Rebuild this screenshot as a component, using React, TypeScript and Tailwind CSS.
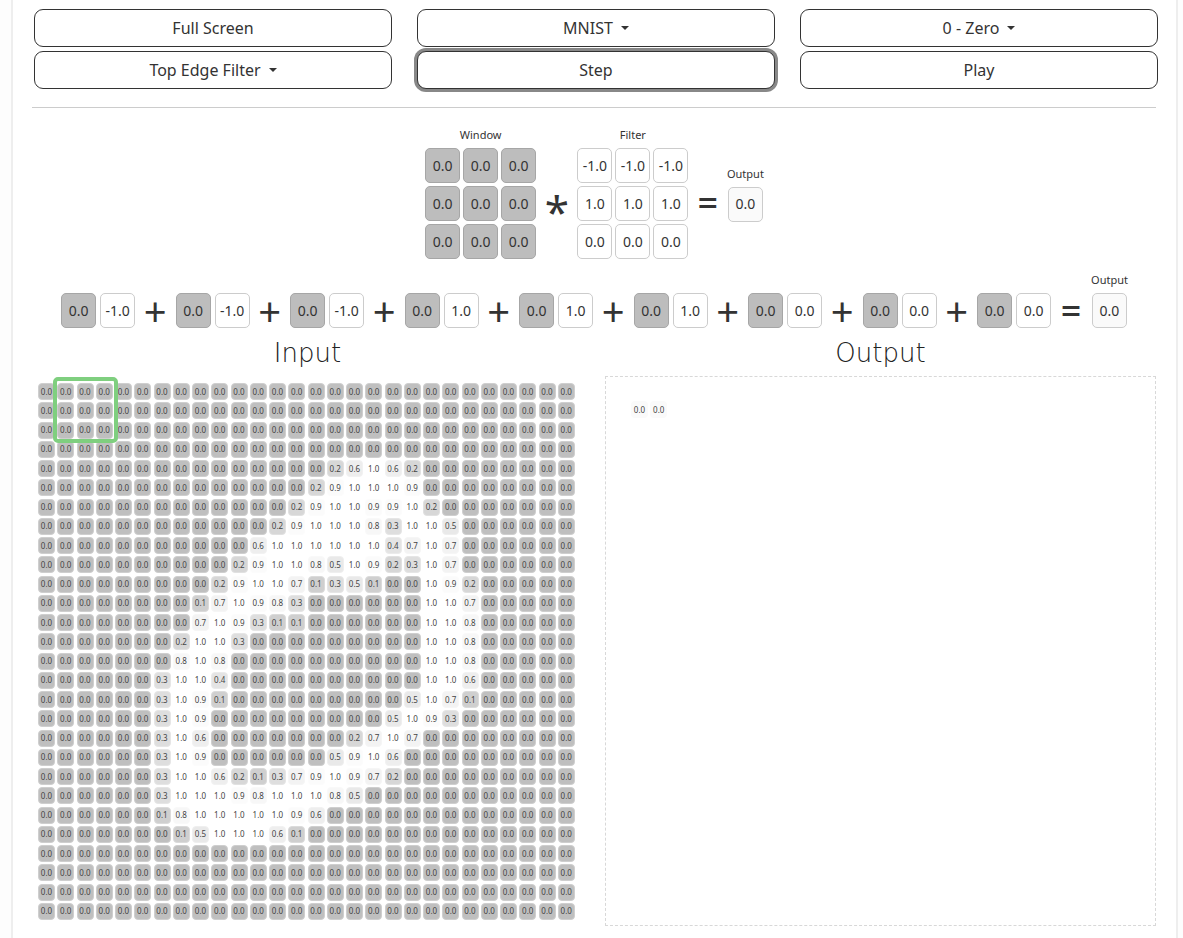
import { Fragment } from 'react';

// non-zero pixels of the digit: row -> list of [start column, values]
const digit: Record<number, [number, number[]][]> = {
  4: [[15, [0.2, 0.6, 1, 0.6, 0.2]]],
  5: [[14, [0.2, 0.9, 1, 1, 1, 0.9]]],
  6: [[13, [0.2, 0.9, 1, 1, 0.9, 0.9, 1, 0.2]]],
  7: [[12, [0.2, 0.9, 1, 1, 1, 0.8, 0.3, 1, 1, 0.5]]],
  8: [[11, [0.6, 1, 1, 1, 1, 1, 1, 0.4, 0.7, 1, 0.7]]],
  9: [[10, [0.2, 0.9, 1, 1, 0.8, 0.5, 1, 0.9, 0.2, 0.3, 1, 0.7]]],
  10: [[9, [0.2, 0.9, 1, 1, 0.7, 0.1, 0.3, 0.5, 0.1]], [20, [1, 0.9, 0.2]]],
  11: [[8, [0.1, 0.7, 1, 0.9, 0.8, 0.3]], [20, [1, 1, 0.7]]],
  12: [[8, [0.7, 1, 0.9, 0.3, 0.1, 0.1]], [20, [1, 1, 0.8]]],
  13: [[7, [0.2, 1, 1, 0.3]], [20, [1, 1, 0.8]]],
  14: [[7, [0.8, 1, 0.8]], [20, [1, 1, 0.8]]],
  15: [[6, [0.3, 1, 1, 0.4]], [20, [1, 1, 0.6]]],
  16: [[6, [0.3, 1, 0.9, 0.1]], [19, [0.5, 1, 0.7, 0.1]]],
  17: [[6, [0.3, 1, 0.9]], [18, [0.5, 1, 0.9, 0.3]]],
  18: [[6, [0.3, 1, 0.6]], [16, [0.2, 0.7, 1, 0.7]]],
  19: [[6, [0.3, 1, 0.9]], [15, [0.5, 0.9, 1, 0.6]]],
  20: [[6, [0.3, 1, 1, 0.6, 0.2, 0.1, 0.3, 0.7, 0.9, 1, 0.9, 0.7, 0.2]]],
  21: [[6, [0.3, 1, 1, 1, 0.9, 0.8, 1, 1, 1, 0.8, 0.5]]],
  22: [[6, [0.1, 0.8, 1, 1, 1, 1, 1, 0.9, 0.6]]],
  23: [[7, [0.1, 0.5, 1, 1, 1, 0.6, 0.1]]],
};

const pixels: number[][] = Array.from({ length: 28 }, (_, r) => {
  const row = new Array(28).fill(0);
  (digit[r] || []).forEach(([start, vals]) => vals.forEach((v, i) => (row[start + i] = v)));
  return row;
});

const gray = (v: number) => Math.round(191 + 64 * Math.pow(v, 0.6));

function GridCell({ v }: { v: number }) {
  const g = gray(v);
  const edge = Math.round((g * 3 + 255) / 4);
  return (
    <div
      className="flex h-[17px] w-[17px] items-center justify-center rounded-[4px] border text-[8px] leading-none text-[#444]"
      style={{ backgroundColor: `rgb(${g},${g},${g})`, borderColor: `rgb(${edge},${edge},${edge})` }}
    >
      {v.toFixed(1)}
    </div>
  );
}

function Box({ v, gray, out }: { v: string; gray?: boolean; out?: boolean }) {
  return (
    <div
      className={
        gray
          ? 'flex h-[35px] w-[35px] items-center justify-center rounded-[5px] border border-[#a6a6a6] bg-[#bdbdbd] text-sm text-[#333]'
          : out
            ? 'flex h-[35px] w-[35px] items-center justify-center rounded-[5px] border border-[#ccc] bg-[#fafafa] text-sm text-[#333]'
            : 'flex h-[35px] w-[35px] items-center justify-center rounded-[5px] border border-[#ccc] bg-white text-sm text-[#333]'
      }
    >
      {v}
    </div>
  );
}

function Caret() {
  return <span className="ml-[8px] inline-block border-x-4 border-t-4 border-x-transparent border-t-[#333] align-middle" />;
}

const filterVals = ['-1.0', '-1.0', '-1.0', '1.0', '1.0', '1.0', '0.0', '0.0', '0.0'];

const btn = 'flex h-[38px] items-center justify-center rounded-[9px] border border-[#333] bg-white text-base text-[#333]';
const heading = "mt-[8px] text-center font-['DejaVu_Sans',sans-serif] text-[26px] font-extralight leading-[34px] text-[#222]";
const outCell = 'flex h-[17px] w-[17px] items-center justify-center rounded-[4px] bg-[#fafafa] text-[8px] leading-none text-[#444]';

export default function App() {
  return (
    <div className="h-[938px] overflow-hidden bg-[#fdfdfd] font-['Noto_Sans',sans-serif]">
      <div className="ml-[11px] mr-[5px] h-full border-x-2 border-[#eee] bg-white pl-[19px] pt-[9px]">
        <div className="ml-[2px] grid grid-cols-[repeat(3,358px)] gap-x-[25px] gap-y-1">
          <div className={btn}>Full Screen</div>
          <div className={btn}>MNIST<Caret /></div>
          <div className={btn}>0 - Zero<Caret /></div>
          <div className={btn}>Top Edge Filter<Caret /></div>
          <div className={`${btn} ring-[3px] ring-[#888]`}>Step</div>
          <div className={btn}>Play</div>
        </div>
        <hr className="mt-[18px] w-[1124px] border-[#ccc]" />

        <div className="mt-[20px] flex w-[1124px] items-center justify-center pl-[1px]">
          <div className="flex flex-col items-center">
            <div className="mb-[6px] text-[11px] leading-[14px] text-[#333]">Window</div>
            <div className="grid grid-cols-3 gap-[3px]">
              {filterVals.map((_, i) => (
                <Box key={i} v="0.0" gray />
              ))}
            </div>
          </div>
          <div className="mx-[8.5px] mt-[35px] text-[44px] leading-none text-[#333]">*</div>
          <div className="flex flex-col items-center">
            <div className="mb-[6px] text-[11px] leading-[14px] text-[#333]">Filter</div>
            <div className="grid grid-cols-3 gap-[3px]">
              {filterVals.map((v, i) => (
                <Box key={i} v={v} />
              ))}
            </div>
          </div>
          <div className="mx-[9px] mt-[18px] text-[36px] font-medium leading-none text-[#333]">=</div>
          <div className="mt-[1px] flex flex-col items-center">
            <div className="mb-[6px] text-[11px] leading-[14px] text-[#333]">Output</div>
            <Box v="0.0" out />
          </div>
        </div>

        <div className="mt-[13px] flex h-[56px] w-[1124px] items-end justify-center pl-[1px]">
          {filterVals.map((v, i) => (
            <Fragment key={i}>
              <div className="flex gap-[4px]">
                <Box v="0.0" gray />
                <Box v={v} />
              </div>
              {i < 8 && <div className="w-[40.5px] text-center text-[40px] leading-[35px] text-[#333]">+</div>}
            </Fragment>
          ))}
          <div className="w-[40px] text-center text-[36px] font-medium leading-[35px] text-[#333]">=</div>
          <div className="flex flex-col items-center">
            <div className="mb-[6px] text-[11px] leading-[14px] text-[#333]">Output</div>
            <Box v="0.0" out />
          </div>
        </div>

        <div className="grid w-[1124px] grid-cols-2 gap-x-[22px]">
          <h2 className={heading}>Input</h2>
          <h2 className={heading}>Output</h2>

          <div className="relative mt-[6px] h-[550px] pl-[6px] pt-[7px]">
            <div className="grid grid-cols-[repeat(28,17px)] gap-[2.26px]">
              {pixels.flat().map((v, i) => (
                <GridCell key={i} v={v} />
              ))}
            </div>
            <div className="absolute left-[21px] top-[1px] h-[66px] w-[65px] rounded-[5px] border-[4px] border-[#7fcf7f]" />
          </div>

          <div className="mt-[6px] h-[550px] border border-dashed border-[#d8d8d8] pl-[25px] pt-[24px]">
            <div className="flex gap-[2.26px]">
              <div className={outCell}>0.0</div>
              <div className={outCell}>0.0</div>
            </div>
          </div>
        </div>
      </div>
    </div>
  );
}
